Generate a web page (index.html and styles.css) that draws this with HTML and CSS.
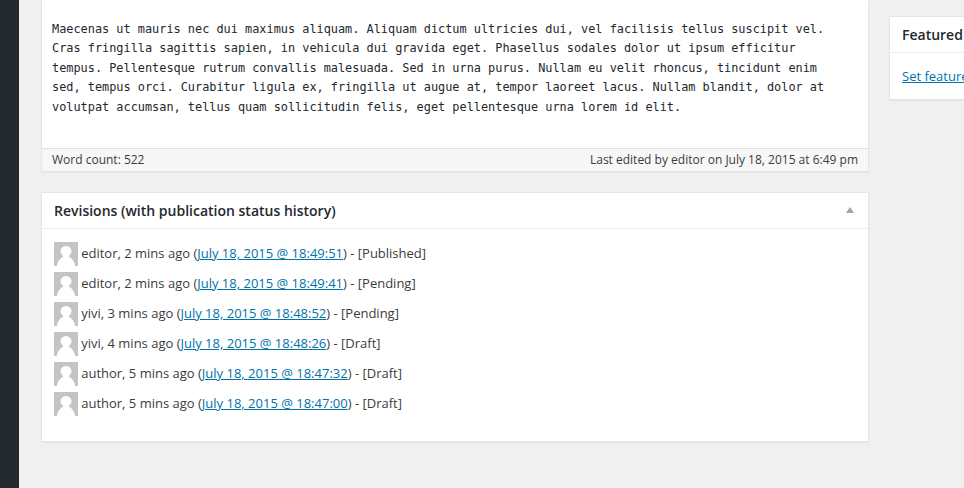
FILE: index.html
```html
<!DOCTYPE html>
<html lang="en">
<head>
<meta charset="utf-8">
<title>Edit Post</title>
<link rel="stylesheet" href="styles.css">
</head>
<body>
<svg width="0" height="0" class="defs" aria-hidden="true">
  <symbol id="avatar" viewBox="0 0 24 24">
    <rect width="24" height="24" fill="#c4c4c4"/>
    <ellipse cx="12" cy="9.3" rx="5.5" ry="5.4" fill="#fff"/>
    <path d="M2.8 24C3.3 20 5.6 16.2 9.2 14.4V13h5.6v1.4C18.4 16.2 20.7 20 21.2 24z" fill="#fff"/>
  </symbol>
</svg>
<div class="layout">
  <nav class="admin-menu"></nav>
  <main class="main">
    <section class="editor">
      <div class="editor-text">Maecenas ut mauris nec dui maximus aliquam. Aliquam dictum ultricies dui, vel facilisis tellus suscipit vel.<br>Cras fringilla sagittis sapien, in vehicula dui gravida eget. Phasellus sodales dolor ut ipsum efficitur<br>tempus. Pellentesque rutrum convallis malesuada. Sed in urna purus. Nullam eu velit rhoncus, tincidunt enim<br>sed, tempus orci. Curabitur ligula ex, fringilla ut augue at, tempor laoreet lacus. Nullam blandit, dolor at<br>volutpat accumsan, tellus quam sollicitudin felis, eget pellentesque urna lorem id elit.</div>
      <div class="status-bar"><span>Word count: 522</span><span>Last edited by editor on July 18, 2015 at 6:49 pm</span></div>
    </section>
    <section class="box revisions">
      <h2 class="box-title">Revisions (with publication status history)
        <svg class="toggle" width="8" height="6" viewBox="0 0 8 6"><path d="M4 0L8 6H0z" fill="#a0a5aa"/></svg>
      </h2>
      <ul class="revision-list">
        <li><svg class="avatar"><use href="#avatar"/></svg><span>editor, 2 mins ago (<a href="#">July 18, 2015 @ 18:49:51</a>) - [Published]</span></li>
        <li><svg class="avatar"><use href="#avatar"/></svg><span>editor, 2 mins ago (<a href="#">July 18, 2015 @ 18:49:41</a>) - [Pending]</span></li>
        <li><svg class="avatar"><use href="#avatar"/></svg><span>yivi, 3 mins ago (<a href="#">July 18, 2015 @ 18:48:52</a>) - [Pending]</span></li>
        <li><svg class="avatar"><use href="#avatar"/></svg><span>yivi, 4 mins ago (<a href="#">July 18, 2015 @ 18:48:26</a>) - [Draft]</span></li>
        <li><svg class="avatar"><use href="#avatar"/></svg><span>author, 5 mins ago (<a href="#">July 18, 2015 @ 18:47:32</a>) - [Draft]</span></li>
        <li><svg class="avatar"><use href="#avatar"/></svg><span>author, 5 mins ago (<a href="#">July 18, 2015 @ 18:47:00</a>) - [Draft]</span></li>
      </ul>
    </section>
  </main>
  <aside class="side">
    <section class="box featured">
      <h2 class="box-title">Featured</h2>
      <div class="featured-body"><a href="#">Set feature</a></div>
    </section>
  </aside>
</div>
</body>
</html>
```
FILE: styles.css
```css
* { box-sizing: border-box; }
body {
  margin: 0;
  background: #f0f0f0;
  color: #3c3c3c;
  font: 13px/18px "Open Sans", sans-serif;
}
.defs { display: block; }
.layout { display: flex; width: 964px; height: 488px; overflow: hidden; }
.admin-menu { flex: none; width: 19px; background: #23282d; }
.main { flex: none; width: 828px; margin-left: 22px; }
.editor {
  height: 172px;
  border: 1px solid #e5e5e5;
  border-top: 0;
  background: #fff;
  box-shadow: 0 1px 1px rgba(0, 0, 0, .04);
}
.editor-text {
  height: 148px;
  padding: 19.5px 10px 0;
  color: #23282d;
  font: 11.88px/19.5px "DejaVu Sans Mono", monospace;
  white-space: nowrap;
}
.status-bar {
  display: flex;
  justify-content: space-between;
  height: 23px;
  padding: 0 10px;
  border-top: 1px solid #e1e1e1;
  background: #f7f7f7;
  font-size: 12px;
  line-height: 22px;
}
.box {
  border: 1px solid #e5e5e5;
  background: #fff;
  box-shadow: 0 1px 1px rgba(0, 0, 0, .04);
}
.box-title {
  display: flex;
  align-items: center;
  justify-content: space-between;
  height: 36px;
  margin: 0;
  padding: 0 14px 0 12px;
  border-bottom: 1px solid #eee;
  color: #23282d;
  font-size: 14px;
  font-weight: 600;
  white-space: nowrap;
}
.toggle { margin-bottom: 1px; }
.revisions { height: 250px; margin-top: 20px; }
.revision-list {
  display: grid;
  gap: 6px;
  margin: 0;
  padding: 13px 12px;
  list-style: none;
}
.revision-list li { display: flex; align-items: flex-start; gap: 3.2px; height: 24px; }
.revision-list span { padding-top: 2px; }
.avatar { width: 24px; height: 24px; }
a { color: #0073aa; text-decoration: underline; }
.side { flex: 1; min-width: 0; margin-left: 20px; padding-top: 16px; }
.featured { width: 75px; height: 84px; border-right: 0; }
.featured .box-title { padding-right: 0; }
.featured-body { padding: 14px 0 14px 12px; white-space: nowrap; }
```
